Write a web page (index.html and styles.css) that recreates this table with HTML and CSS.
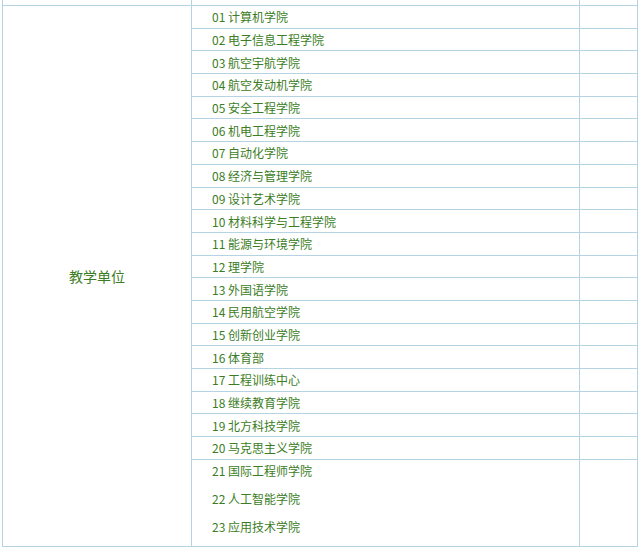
FILE: index.html
```html
<!DOCTYPE html>
<html lang="zh-CN">
<head>
<meta charset="utf-8">
<title>教学单位</title>
<link rel="stylesheet" href="styles.css">
</head>
<body>
<div class="table">
  <div class="stub">
    <div class="stub-left"></div>
    <div class="stub-mid"></div>
    <div class="stub-right"></div>
  </div>
  <div class="main">
    <div class="label">教学单位</div>
    <div class="rows">
      <div class="row"><div class="name">01 计算机学院</div><div class="extra"></div></div>
      <div class="row"><div class="name">02 电子信息工程学院</div><div class="extra"></div></div>
      <div class="row"><div class="name">03 航空宇航学院</div><div class="extra"></div></div>
      <div class="row"><div class="name">04 航空发动机学院</div><div class="extra"></div></div>
      <div class="row"><div class="name">05 安全工程学院</div><div class="extra"></div></div>
      <div class="row"><div class="name">06 机电工程学院</div><div class="extra"></div></div>
      <div class="row"><div class="name">07 自动化学院</div><div class="extra"></div></div>
      <div class="row"><div class="name">08 经济与管理学院</div><div class="extra"></div></div>
      <div class="row"><div class="name">09 设计艺术学院</div><div class="extra"></div></div>
      <div class="row"><div class="name">10 材料科学与工程学院</div><div class="extra"></div></div>
      <div class="row"><div class="name">11 能源与环境学院</div><div class="extra"></div></div>
      <div class="row"><div class="name">12 理学院</div><div class="extra"></div></div>
      <div class="row"><div class="name">13 外国语学院</div><div class="extra"></div></div>
      <div class="row"><div class="name">14 民用航空学院</div><div class="extra"></div></div>
      <div class="row"><div class="name">15 创新创业学院</div><div class="extra"></div></div>
      <div class="row"><div class="name">16 体育部</div><div class="extra"></div></div>
      <div class="row"><div class="name">17 工程训练中心</div><div class="extra"></div></div>
      <div class="row"><div class="name">18 继续教育学院</div><div class="extra"></div></div>
      <div class="row"><div class="name">19 北方科技学院</div><div class="extra"></div></div>
      <div class="row"><div class="name">20 马克思主义学院</div><div class="extra"></div></div>
      <div class="row last">
        <div class="name multi">
          <p>21 国际工程师学院</p>
          <p>22 人工智能学院</p>
          <p>23 应用技术学院</p>
        </div>
        <div class="extra"></div>
      </div>
    </div>
  </div>
</div>
</body>
</html>
```

FILE: styles.css
```css
html, body {
  margin: 0;
  padding: 0;
  background: #ffffff;
}

body {
  font-family: "Noto Sans CJK SC", "Noto Sans", sans-serif;
  color: #3b7d25;
  overflow: hidden;
}

.table {
  margin-left: 2px;
  width: 636px;
  border-left: 1px solid #b5d3e3;
  border-right: 1px solid #b5d3e3;
  box-sizing: border-box;
  display: flex;
  flex-direction: column;
}

.stub {
  display: flex;
  height: 5px;
}

.stub-left {
  width: 189px;
  box-sizing: border-box;
  border-right: 1px solid #b5d3e3;
}

.stub-mid {
  width: 388px;
  box-sizing: border-box;
  border-right: 1px solid #b5d3e3;
}

.stub-right {
  flex: 1;
}

.main {
  display: flex;
  border-top: 1px solid #b5d3e3;
  border-bottom: 1px solid #b5d3e3;
}

.label {
  width: 189px;
  flex-shrink: 0;
  border-right: 1px solid #b5d3e3;
  display: flex;
  align-items: center;
  justify-content: center;
  font-size: 14px;
  padding-top: 1px;
  box-sizing: border-box;
}

.rows {
  flex: 1;
  display: flex;
  flex-direction: column;
}

.row {
  display: flex;
  height: 22.7px;
  box-sizing: border-box;
  border-bottom: 1px solid #b5d3e3;
}

.row.last {
  height: 86px;
  border-bottom: none;
}

.name {
  width: 388px;
  flex-shrink: 0;
  box-sizing: border-box;
  border-right: 1px solid #b5d3e3;
  padding-left: 20px;
  font-size: 12px;
  display: flex;
  align-items: center;
}

.name.multi {
  flex-direction: column;
  align-items: flex-start;
  justify-content: flex-start;
  gap: 6px;
}

.name.multi p {
  margin: 0;
  line-height: 22px;
}

.extra {
  flex: 1;
}
```
